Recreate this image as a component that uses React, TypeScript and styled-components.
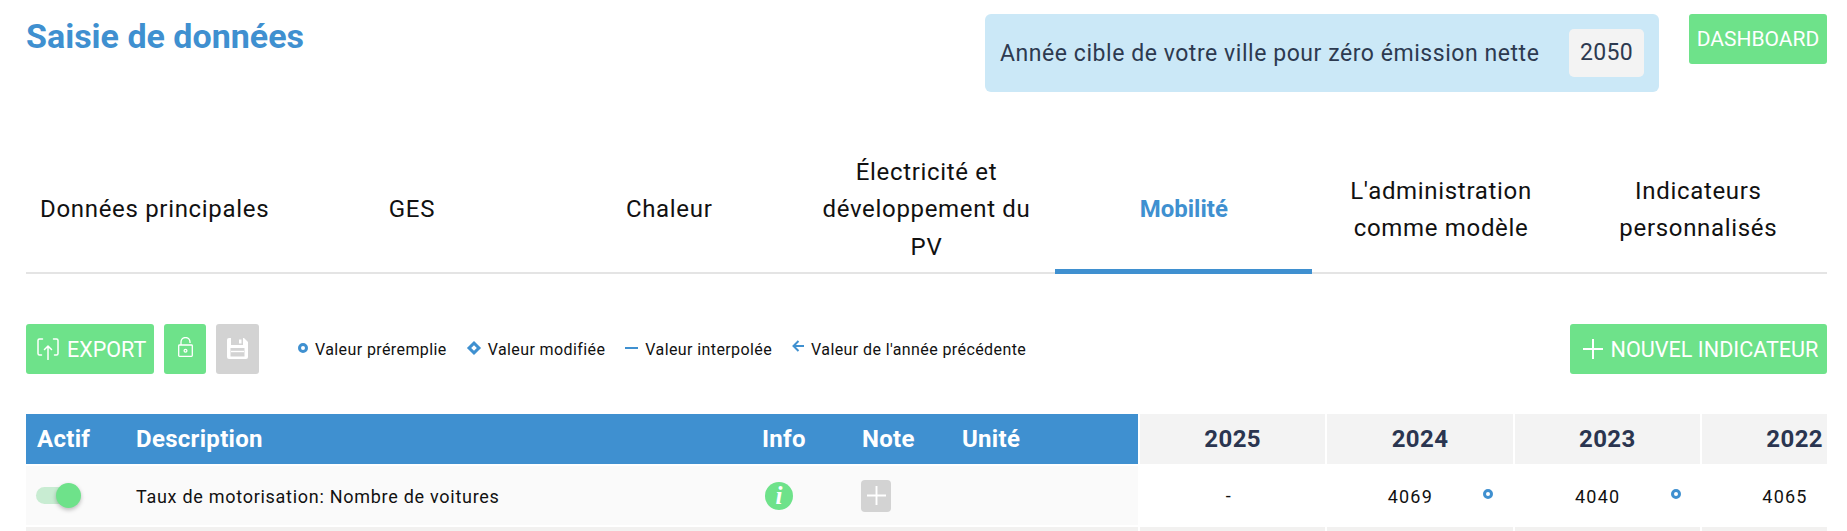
import React from 'react';
import styled, { createGlobalStyle } from 'styled-components';

const BLUE = '#3f90d0';
const GREEN = '#6ee28a';
const BODY_FONT = '"Roboto", "Liberation Sans", sans-serif';

const GlobalStyle = createGlobalStyle`
  html, body {
    margin: 0;
    height: 531px;
    overflow: hidden;
    background: #fff;
    font-family: ${BODY_FONT};
  }
  * { box-sizing: border-box; }
`;

const Page = styled.div`
  width: 1847px;
  padding: 14px 20px 0 26px;
`;

const Header = styled.header`
  display: flex;
  align-items: flex-start;
  height: 138px;
`;

const Title = styled.h1`
  margin: 0;
  flex: 1;
  font-size: 34px;
  line-height: 44px;
  font-weight: 700;
  color: ${BLUE};
`;

const TargetBox = styled.div`
  display: flex;
  align-items: center;
  justify-content: space-between;
  width: 674px;
  height: 78px;
  padding: 0 15px;
  margin-right: 30px;
  border-radius: 6px;
  background: #cbe8f7;
  color: #2d3a50;
  font-size: 23px;
  letter-spacing: 0.55px;
`;

const YearInput = styled.div`
  width: 75px;
  height: 48px;
  line-height: 48px;
  text-align: center;
  border-radius: 5px;
  background: #f3f3f3;
  font-size: 23px;
  letter-spacing: 0.3px;
`;

const Button = styled.button<{ $disabled?: boolean }>`
  display: inline-flex;
  align-items: center;
  justify-content: center;
  height: 50px;
  padding: 0;
  border: none;
  border-radius: 3px;
  background: ${({ $disabled }) => ($disabled ? '#d3d3d3' : GREEN)};
  color: #fff;
  font-family: ${BODY_FONT};
  font-size: 21.5px;
`;

const DashboardButton = styled(Button)`
  width: 138px;
  font-size: 21px;
`;

const Tabs = styled.nav`
  display: grid;
  grid-template-columns: repeat(7, 1fr);
  height: 122px;
  border-bottom: 2px solid #e4e4e4;
`;

const Tab = styled.div<{ $active?: boolean }>`
  display: flex;
  align-items: center;
  justify-content: center;
  height: 122px;
  padding: 0 12px ${({ $active }) => ($active ? 1 : 6)}px;
  text-align: center;
  font-size: 24px;
  line-height: 37.5px;
  letter-spacing: ${({ $active }) => ($active ? 0 : 0.68)}px;
  color: ${({ $active }) => ($active ? BLUE : '#111')};
  font-weight: ${({ $active }) => ($active ? 700 : 400)};
  border-bottom: ${({ $active }) => ($active ? `5px solid ${BLUE}` : 'none')};
`;

const Toolbar = styled.div`
  display: flex;
  align-items: center;
  gap: 10px;
  height: 50px;
  margin-top: 50px;
`;

const ExportButton = styled(Button)`
  justify-content: flex-start;
  width: 128px;
  padding-left: 11px;
  gap: 8px;
`;

const LockButton = styled(Button)`
  width: 42px;
  padding-bottom: 4px;
`;

const SaveButton = styled(Button)`
  width: 43px;
  padding-bottom: 2px;
`;

const Legend = styled.div`
  display: flex;
  align-items: center;
  margin-left: 29px;
  flex: 1;
  font-size: 16px;
  color: #111;
  letter-spacing: 0.4px;
`;

const LegendItem = styled.span`
  display: inline-flex;
  align-items: center;
  gap: 7px;
  margin-right: 20px;
`;

const NewButton = styled(Button)`
  width: 257px;
  padding-left: 4px;
  gap: 8px;
  font-size: 21.6px;
`;

const Table = styled.div`
  width: 1801px;
  margin-top: 40px;
  overflow: hidden;
`;

const Row = styled.div`
  display: grid;
  grid-template-columns: 1114px repeat(4, 187.33px);
  width: 1864px;
`;

const Fixed = styled.div<{ $kind: 'head' | 'body' | 'empty' }>`
  display: grid;
  grid-template-columns: 110px 626px 100px 100px 176px;
  align-items: center;
  margin-right: 2px;
  background: ${({ $kind }) =>
    $kind === 'head' ? BLUE : $kind === 'body' ? '#fafafa' : '#f2f1f0'};
  height: ${({ $kind }) => ($kind === 'head' ? 50 : $kind === 'body' ? 59 : 20)}px;
  margin-top: ${({ $kind }) => ($kind === 'head' ? 0 : 2)}px;
`;

const HeadCell = styled.div<{ $indent?: number }>`
  padding-left: ${({ $indent }) => $indent ?? 0}px;
  color: #fff;
  font-size: 24px;
  font-weight: 700;
  letter-spacing: 0.3px;
`;

const YearHead = styled.div`
  height: 50px;
  line-height: 50px;
  margin-right: 2px;
  text-align: center;
  background: #f3f3f3;
  color: #2a3550;
  font-size: 24px;
  font-weight: 700;
  letter-spacing: 0.4px;
`;

const BodyCell = styled.div`
  display: flex;
  align-items: center;
  font-size: 18px;
  letter-spacing: 0.72px;
  color: #111;
`;

const RowText = styled(BodyCell)`
  padding-top: 2px;
`;

const Toggle = styled.div`
  position: relative;
  width: 38px;
  height: 17px;
  margin-left: 10px;
  border-radius: 9px;
  background: #c8ecd2;
`;

const Knob = styled.span`
  position: absolute;
  top: -4px;
  left: 20px;
  width: 25px;
  height: 25px;
  border-radius: 50%;
  background: ${GREEN};
  box-shadow: 0 2px 4px rgba(0, 0, 0, 0.25);
`;

const InfoDot = styled.div`
  width: 28px;
  height: 28px;
  margin-left: 3px;
  border-radius: 50%;
  background: ${GREEN};
  color: #fff;
  text-align: center;
  font: italic 700 25px/28px "Liberation Serif", serif;
  letter-spacing: 0;
`;

const PlusBox = styled.div`
  display: flex;
  align-items: center;
  justify-content: center;
  width: 30px;
  height: 32px;
  margin-left: -1px;
  border-radius: 4px;
  background: #d3d3d3;
`;

const YearCell = styled.div<{ $empty?: boolean }>`
  display: flex;
  align-items: center;
  justify-content: ${({ $empty }) => ($empty ? 'center' : 'flex-start')};
  height: 59px;
  margin: 2px 2px 0 0;
  padding-left: ${({ $empty }) => ($empty ? 0 : 47)}px;
  padding-right: ${({ $empty }) => ($empty ? 9 : 0)}px;
  background: #fff;
  font-size: 18px;
  color: #111;
`;

const Value = styled.span`
  width: 72px;
  padding-top: 2px;
  text-align: center;
  letter-spacing: 1.2px;
`;

const Ring = styled.span`
  flex: none;
  width: 10px;
  height: 10px;
  border: 3px solid ${BLUE};
  border-radius: 50%;
`;

const CellRing = styled(Ring)`
  margin-left: 37px;
  margin-top: -3px;
`;

const LegendRing = styled(Ring)`
  margin-top: -3px;
`;

const Diamond = styled.span`
  width: 10px;
  height: 10px;
  margin: -3px 2px 0;
  border: 3px solid ${BLUE};
  transform: rotate(45deg);
`;

const Dash = styled.span`
  width: 13px;
  height: 2px;
  margin-top: -2px;
  background: ${BLUE};
`;

const BlankYear = styled.div`
  height: 20px;
  margin: 2px 2px 0 0;
  background: #f2f1f0;
`;

const ExportIcon = () => (
  <svg width="22" height="22" viewBox="0 0 22 22" fill="none" stroke="#fff" strokeWidth="1.5" strokeLinecap="round">
    <path d="M5.500 1H2.500A1.500 1.500 0 0 0 1 2.500v13A1.500 1.500 0 0 0 2.500 17h2" />
    <path d="M16.500 1h3A1.500 1.500 0 0 1 21 2.500v13a1.500 1.500 0 0 1-1.500 1.500h-2" />
    <path d="M11 21.500V8M7.500 11.500 11 8l3.500 3.500" />
  </svg>
);

const LockIcon = () => (
  <svg width="15" height="20" viewBox="0 0 15 20" fill="none" stroke="#fff" strokeWidth="1.300">
    <rect x="0.700" y="8" width="13.600" height="11.300" rx="0.800" />
    <path d="M3 8V5a4.500 4.500 0 0 1 9 0v1" />
    <circle cx="7.500" cy="13.700" r="1.400" strokeWidth="1.300" />
  </svg>
);

const SaveIcon = () => (
  <svg width="21" height="21" viewBox="0 0 21 21">
    <path fill="#fff" d="M2 0h15l4 4v15a2 2 0 0 1-2 2H2a2 2 0 0 1-2-2V2a2 2 0 0 1 2-2z" />
    <rect x="4" y="0" width="12" height="7" fill="#d3d3d3" />
    <rect x="12" y="1.500" width="2.500" height="4" fill="#fff" />
    <rect x="3.500" y="10" width="14" height="8.500" fill="#d3d3d3" />
    <path stroke="#fff" strokeWidth="1.400" d="M4 13.500h13" />
  </svg>
);

const PlusIcon = ({ size, weight }: { size: number; weight: number }) => (
  <svg width={size} height={size} viewBox="0 0 20 20" stroke="#fff" strokeWidth={weight}>
    <path d="M10 0v20M0 10h20" />
  </svg>
);

const ArrowIcon = () => (
  <svg width="12" height="14" viewBox="0 0 12 14" fill="none" stroke={BLUE} strokeWidth="2" style={{ marginTop: -4 }}>
    <path d="M12 6H2M6.500 1 1.500 6l5 5" />
  </svg>
);

const years = [2025, 2024, 2023, 2022];
const values = [null, '4069', '4040', '4065'];

export default function App() {
  return (
    <Page>
      <GlobalStyle />
      <Header>
        <Title>Saisie de données</Title>
        <TargetBox>
          <span>Année cible de votre ville pour zéro émission nette</span>
          <YearInput>2050</YearInput>
        </TargetBox>
        <DashboardButton>DASHBOARD</DashboardButton>
      </Header>

      <Tabs>
        <Tab>Données principales</Tab>
        <Tab>GES</Tab>
        <Tab>Chaleur</Tab>
        <Tab>Électricité et développement du PV</Tab>
        <Tab $active>Mobilité</Tab>
        <Tab>L'administration comme modèle</Tab>
        <Tab>Indicateurs personnalisés</Tab>
      </Tabs>

      <Toolbar>
        <ExportButton>
          <ExportIcon />
          EXPORT
        </ExportButton>
        <LockButton>
          <LockIcon />
        </LockButton>
        <SaveButton $disabled>
          <SaveIcon />
        </SaveButton>
        <Legend>
          <LegendItem>
            <LegendRing />
            Valeur préremplie
          </LegendItem>
          <LegendItem>
            <Diamond />
            Valeur modifiée
          </LegendItem>
          <LegendItem>
            <Dash />
            Valeur interpolée
          </LegendItem>
          <LegendItem>
            <ArrowIcon />
            Valeur de l'année précédente
          </LegendItem>
        </Legend>
        <NewButton>
          <PlusIcon size={20} weight={2} />
          NOUVEL INDICATEUR
        </NewButton>
      </Toolbar>

      <Table>
        <Row>
          <Fixed $kind="head">
            <HeadCell $indent={11}>Actif</HeadCell>
            <HeadCell>Description</HeadCell>
            <HeadCell>Info</HeadCell>
            <HeadCell>Note</HeadCell>
            <HeadCell>Unité</HeadCell>
          </Fixed>
          {years.map((year) => (
            <YearHead key={year}>{year}</YearHead>
          ))}
        </Row>
        <Row>
          <Fixed $kind="body">
            <BodyCell>
              <Toggle>
                <Knob />
              </Toggle>
            </BodyCell>
            <RowText>Taux de motorisation: Nombre de voitures</RowText>
            <BodyCell>
              <InfoDot>i</InfoDot>
            </BodyCell>
            <BodyCell>
              <PlusBox>
                <PlusIcon size={19} weight={2} />
              </PlusBox>
            </BodyCell>
            <BodyCell />
          </Fixed>
          {values.map((value, i) =>
            value === null ? (
              <YearCell key={i} $empty>
                -
              </YearCell>
            ) : (
              <YearCell key={i}>
                <Value>{value}</Value>
                {i < 3 && <CellRing />}
              </YearCell>
            ),
          )}
        </Row>
        <Row>
          <Fixed $kind="empty" />
          {years.map((year) => (
            <BlankYear key={year} />
          ))}
        </Row>
      </Table>
    </Page>
  );
}
